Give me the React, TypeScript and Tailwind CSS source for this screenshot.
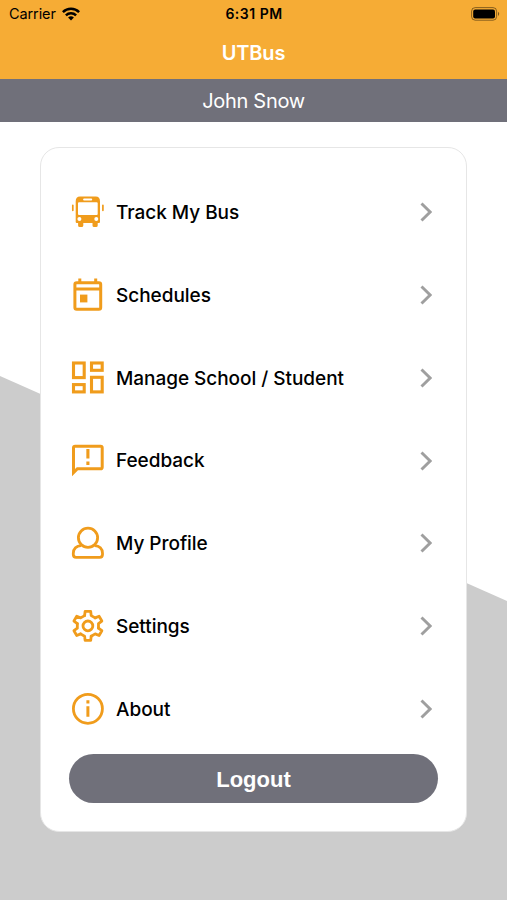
import type { ReactNode } from 'react';

const Icon = ({ children }: { children: ReactNode }) => (
  <svg viewBox="0 0 36 36" className="h-9 w-9 shrink-0" fill="none" stroke="currentColor" strokeWidth="2.8">
    {children}
  </svg>
);

const gearTeeth = [0, 60, 120, 180, 240, 300];

const menuItems = [
  {
    title: 'Track My Bus',
    icon: (
      <Icon>
        <path
          fill="currentColor"
          stroke="none"
          fillRule="evenodd"
          d="M10 2.6h15.8q4.2 0 4.2 5V28q0 1-1 1h-1.3v2.4q0 1.6-1.6 1.6h-2q-1.6 0-1.6-1.6V29h-9.2v2.4q0 1.6-1.6 1.6h-2Q8.1 33 8.1 31.4V29H6.8q-1.1 0-1.1-1V7.6q0-5 4.3-5ZM9 8.3q-1 0-1 1v10.6q0 1 1 1h17.7q1 0 1-1V9.3q0-1-1-1ZM14.1 4.6a1 1 0 0 0 0 2h7.1a1 1 0 0 0 0-2ZM9.4 23a2 2 0 1 0 0 4 2 2 0 0 0 0-4ZM26.3 23a2 2 0 1 0 0 4 2 2 0 0 0 0-4Z"
        />
        <path d="M2.8 11.3v5M32.9 11.3v5" strokeWidth="1.7" strokeLinecap="round" />
      </Icon>
    ),
  },
  {
    title: 'Schedules',
    icon: (
      <Icon>
        <rect x="4.9" y="5.7" width="25.8" height="26.5" rx="1.8" strokeWidth="3" />
        <path d="M4.9 12.1h25.8M9.8 1.6v4M25.7 1.6v4" strokeWidth="3" />
        <path d="M10 17.6h7.4v7.8H10z" fill="currentColor" stroke="none" />
      </Icon>
    ),
  },
  {
    title: 'Manage School / Student',
    icon: (
      <Icon>
        <g strokeWidth="3.1">
          <rect x="3.5" y="3" width="10.7" height="14.6" />
          <rect x="21.5" y="3" width="10.7" height="7.3" />
          <rect x="3.5" y="24.6" width="10.7" height="7.3" />
          <rect x="21.5" y="17.3" width="10.7" height="14.6" />
        </g>
      </Icon>
    ),
  },
  {
    title: 'Feedback',
    icon: (
      <Icon>
        <path
          fill="currentColor"
          stroke="none"
          fillRule="evenodd"
          d="M5.2 1.7h25.4q3.1 0 3.1 3.1v19.4q0 3.1-3.1 3.1H8L2 33.3V4.8q0-3.1 3.2-3.1ZM5 4.8v21.3l1.8-1.8h23.9V4.8Z"
        />
        <path d="M17.9 6v9.4M17.9 18.6V22" strokeWidth="3.1" />
      </Icon>
    ),
  },
  {
    title: 'My Profile',
    icon: (
      <Icon>
        <circle cx="18" cy="12.7" r="9.6" />
        <path d="M11.2 20.7C6.4 20.6 3.3 24 3.3 28.2v1.3q0 2.8 2.8 2.8h23.6q2.8 0 2.8-2.8v-1.3c0-4.2-3.1-7.6-7.9-7.5" />
      </Icon>
    ),
  },
  {
    title: 'Settings',
    icon: (
      <Icon>
        <g transform="translate(17.9 17.9)" strokeLinecap="round" strokeLinejoin="round">
          <circle r="4.9" />
          {gearTeeth.map((angle) => (
            <path key={angle} transform={`rotate(${angle})`} d="M-3.3-10.3-2.8-14.5H2.8L3.3-10.3 7.27-8.01" />
          ))}
        </g>
      </Icon>
    ),
  },
  {
    title: 'About',
    icon: (
      <Icon>
        <circle cx="17.9" cy="17.8" r="14.5" />
        <path d="M17.9 9.3v3.1M17.9 15.2v10.6" strokeWidth="3" />
      </Icon>
    ),
  },
];

function StatusBar() {
  return (
    <div className="grid h-[27px] grid-cols-3 items-center pr-[6px] pl-[9px] text-black">
      <div className="flex items-center gap-[6px]">
        <span className="text-[14.5px] tracking-[-0.1px]">Carrier</span>
        <svg viewBox="0 0 18 14" className="h-[14px] w-[18px]" fill="none" stroke="currentColor" strokeWidth="2.5">
          <path d="M.9 5.2a11.5 11.5 0 0 1 16.2 0M3.9 8.4a7.3 7.3 0 0 1 10.2 0" />
          <path d="M9 13.6 6.1 10.6a4.1 4.1 0 0 1 5.8 0Z" fill="currentColor" stroke="none" />
        </svg>
      </div>
      <span className="pr-[2px] text-center text-[14px] font-semibold tracking-[0.5px] whitespace-nowrap">6:31 PM</span>
      <svg viewBox="0 0 30 14" className="h-[14px] w-[30px] justify-self-end">
        <rect x=".6" y=".6" width="25" height="12.6" rx="3.6" fill="none" stroke="#000" strokeOpacity=".45" />
        <rect x="2.2" y="2.4" width="21.8" height="9.2" rx="2" />
        <path d="M27 4.8q2.4 2.1 0 4.2Z" fillOpacity=".5" />
      </svg>
    </div>
  );
}

export default function App() {
  return (
    <div className="relative flex h-[900px] w-[507px] flex-col overflow-hidden bg-white font-['Inter',sans-serif]">
      <div className="absolute inset-0 bg-[#cccccc] [clip-path:polygon(0_376px,100%_601px,100%_100%,0_100%)]" />

      <header className="relative h-[79px] bg-[#f6ac35]">
        <StatusBar />
        <h1 className="pt-[11px] text-center text-[20px] leading-[30px] font-semibold tracking-[-0.15px] text-white">
          UTBus
        </h1>
      </header>
      <div className="relative h-[43px] bg-[#70707a] pt-px text-center text-[20px] leading-[43px] tracking-[-0.3px] text-white">
        John Snow
      </div>

      <main className="relative mx-[40px] mt-[25px] flex h-[685px] flex-col rounded-[19px] border border-[#e6e6e6] bg-white px-[28px] pt-[23px]">
        <ul>
          {menuItems.map((item) => (
            <li key={item.title} className="flex h-[82.75px] items-center pl-px text-[#f09c1c]">
              {item.icon}
              <span className="ml-[10px] flex-1 pt-[2px] text-[19px] font-medium tracking-[-0.04px] whitespace-nowrap text-black">
                {item.title}
              </span>
              <svg viewBox="0 0 12 20" className="mr-[6px] h-5 w-3" fill="none" stroke="#9f9f9f" strokeWidth="2.9">
                <path d="m1.5 1.5 8.6 8.5-8.6 8.5" />
              </svg>
            </li>
          ))}
        </ul>
        <button className="mt-[4px] h-[49px] rounded-full bg-[#70707a] pt-[2px] font-['Liberation_Sans',sans-serif] text-[22px] font-bold text-white">
          Logout
        </button>
      </main>
    </div>
  );
}
